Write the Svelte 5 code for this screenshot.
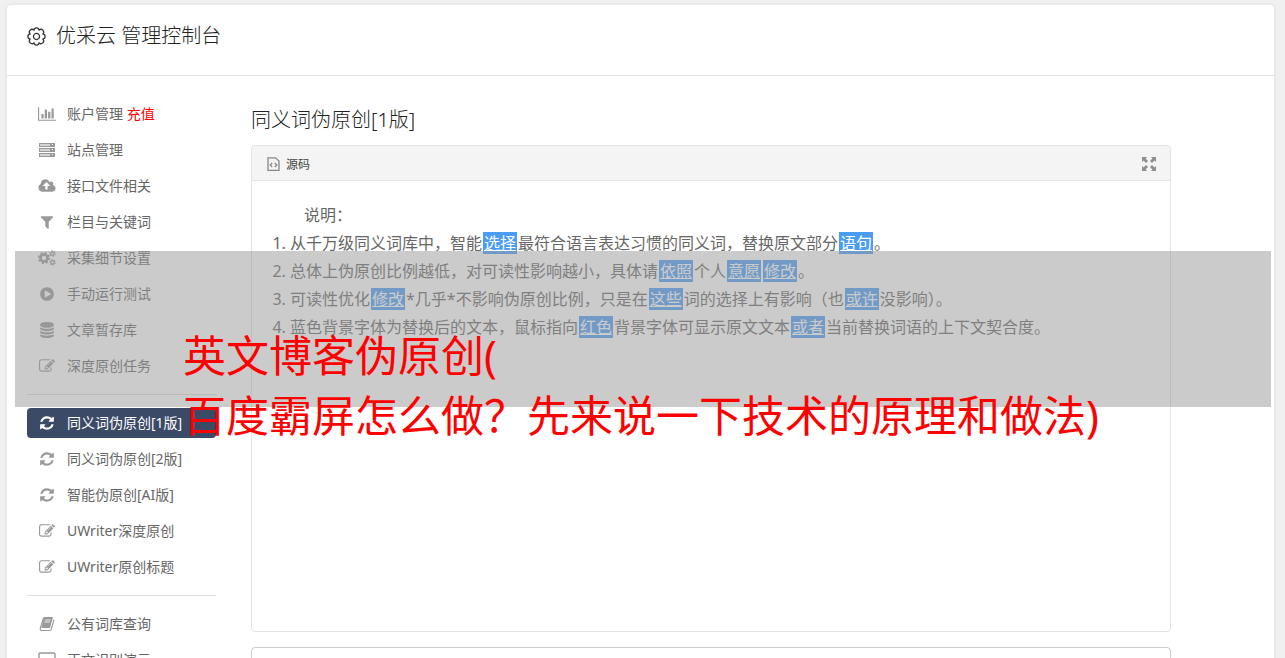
<script lang="ts">
  const groups = [
    [
      { label: '账户管理', extra: '充值', icon: 'chart' },
      { label: '站点管理', icon: 'server' },
      { label: '接口文件相关', icon: 'cloud' },
      { label: '栏目与关键词', icon: 'filter' },
      { label: '采集细节设置', icon: 'cogs' },
      { label: '手动运行测试', icon: 'play' },
      { label: '文章暂存库', icon: 'database' },
      { label: '深度原创任务', icon: 'edit' },
    ],
    [
      { label: '同义词伪原创[1版]', icon: 'refresh' },
      { label: '同义词伪原创[2版]', icon: 'refresh' },
      { label: '智能伪原创[AI版]', icon: 'refresh' },
      { label: 'UWriter深度原创', icon: 'edit' },
      { label: 'UWriter原创标题', icon: 'edit' },
    ],
    [
      { label: '公有词库查询', icon: 'book' },
      { label: '正文识别演示', icon: 'desktop' },
    ],
  ];

  const icons: Record<string, { box: string; d: string }> = {
    chart: {
      box: '0 0 2048 1792',
      d: 'M640 896v512h-256v-512h256zm384-512v1024h-256v-1024h256zm1024 1152v128h-2048v-1536h128v1408h1920zm-640-896v768h-256v-768h256zm384-384v1152h-256v-1152h256z',
    },
    cloud: {
      box: '0 0 1920 1792',
      d: 'M1280 864q0-14-9-23l-352-352q-9-9-23-9t-23 9l-351 351q-10 12-10 24 0 14 9 23t23 9h224v352q0 13 9.5 22.5t22.5 9.5h192q13 0 22.5-9.5t9.5-22.5v-352h224q13 0 22.5-9.5t9.5-22.5zm640 288q0 159-112.5 271.5t-271.5 112.5h-1088q-185 0-316.5-131.5t-131.5-316.5q0-130 70-240t188-165q-2-30-2-43 0-212 150-362t362-150q156 0 285.5 87t188.5 231q71-62 166-62 106 0 181 75t75 181q0 76-41 138 130 31 213.5 135.5t83.5 238.5z',
    },
    filter: {
      box: '0 0 1792 1792',
      d: 'M1595 295q17 41-14 70l-493 493v742q0 42-39 59-13 5-25 5-27 0-45-19l-256-256q-19-19-19-45v-486l-493-493q-31-29-14-70 17-39 59-39h1280q42 0 59 39z',
    },
    play: {
      box: '0 0 1792 1792',
      d: 'M896 128q209 0 385.5 103t279.5 279.5 103 385.5-103 385.5-279.5 279.5-385.5 103-385.5-103-279.5-279.5-103-385.5 103-385.5 279.5-279.5 385.5-103zm384 823q32-18 32-55t-32-55l-544-320q-31-19-64-1-32 19-32 56v640q0 37 32 56 16 8 32 8 17 0 32-9z',
    },
    database: {
      box: '0 0 1792 1792',
      d: 'M896 768q237 0 443-43t325-127v170q0 69-103 128t-280 93.5-385 34.5-385-34.5-280-93.5-103-128v-170q119 84 325 127t443 43zm0 768q237 0 443-43t325-127v170q0 69-103 128t-280 93.5-385 34.5-385-34.5-280-93.5-103-128v-170q119 84 325 127t443 43zm0-384q237 0 443-43t325-127v170q0 69-103 128t-280 93.5-385 34.5-385-34.5-280-93.5-103-128v-170q119 84 325 127t443 43zm0-1152q208 0 385 34.5t280 93.5 103 128v128q0 69-103 128t-280 93.5-385 34.5-385-34.5-280-93.5-103-128v-128q0-69 103-128t280-93.5 385-34.5z',
    },
    edit: {
      box: '0 0 1792 1792',
      d: 'M888 1184l116-116-152-152-116 116v56h96v96h56zm440-720q-16-16-33 1l-350 350q-17 17-1 33t33-1l350-350q17-17 1-33zm80 594v190q0 119-84.5 203.5t-203.5 84.5h-832q-119 0-203.5-84.5t-84.5-203.5v-832q0-119 84.5-203.5t203.5-84.5h832q63 0 117 25 15 7 18 23 3 17-9 29l-49 49q-14 14-32 8-23-6-45-6h-832q-66 0-113 47t-47 113v832q0 66 47 113t113 47h832q66 0 113-47t47-113v-126q0-13 9-22l64-64q15-15 35-7t20 29zm-96-738l288 288-672 672h-288v-288zm444 132l-92 92-288-288 92-92q28-28 68-28t68 28l152 152q28 28 28 68t-28 68z',
    },
    refresh: {
      box: '0 0 1792 1792',
      d: 'M1639 1056q0 5-1 7-64 268-268 434.5t-478 166.5q-146 0-282.5-55t-243.5-157l-129 129q-19 19-45 19t-45-19-19-45v-448q0-26 19-45t45-19h448q26 0 45 19t19 45-19 45l-137 137q71 66 161 102t187 36q134 0 250-65t186-179q11-17 53-117 8-23 30-23h192q13 0 22.5 9.5t9.5 22.5zm25-800v448q0 26-19 45t-45 19h-448q-26 0-45-19t-19-45 19-45l138-138q-148-137-349-137-134 0-250 65t-186 179q-11 17-53 117-8 23-30 23h-199q-13 0-22.5-9.5t-9.5-22.5v-7q65-268 270-434.5t480-166.5q146 0 284 55.5t245 156.5l130-129q19-19 45-19t45 19 19 45z',
    },
  };

  // plain strings are text, marked ones are replaced words
  const notes = [
    ['从千万级同义词库中，智能', { w: '选择' }, '最符合语言表达习惯的同义词，替换原文部分', { w: '语句' }, '。'],
    ['总体上伪原创比例越低，对可读性影响越小，具体请', { w: '依照' }, '个人', { w: '意愿' }, { w: '修改' }, '。'],
    ['可读性优化', { w: '修改' }, '*几乎*不影响伪原创比例，只是在', { w: '这些' }, '词的选择上有影响（也', { w: '或许' }, '没影响）。'],
    ['蓝色背景字体为替换后的文本，鼠标指向', { w: '红色' }, '背景字体可显示原文文本', { w: '或者' }, '当前替换词语的上下文契合度。'],
  ];

  let active = $state('同义词伪原创[1版]');
</script>

{#snippet navIcon(name: string)}
  {#if icons[name]}
    <svg class="icon" class:wide={name === 'chart' || name === 'cloud'} viewBox={icons[name].box} fill="currentColor" aria-hidden="true">
      <path d={icons[name].d} />
    </svg>
  {:else if name === 'server'}
    <svg class="icon" viewBox="0 0 16 16" aria-hidden="true">
      {#each [1, 6, 11] as y}
        <rect x="0" {y} width="16" height="4" fill="currentColor" />
        <rect x="1" y={y + 1} width="10" height="2" fill="#d4d4d4" />
        <rect x="13" y={y + 1} width="1" height="1" fill="#fff" />
      {/each}
    </svg>
  {:else if name === 'cogs'}
    <svg class="icon wide" viewBox="0 0 18 16" fill="none" stroke="currentColor" aria-hidden="true">
      <circle cx="6" cy="8" r="3.5" stroke-width="2.6" />
      <circle cx="6" cy="8" r="5.2" stroke-width="1.8" stroke-dasharray="2.04 2.04" />
      <circle cx="14.5" cy="3.6" r="1.7" stroke-width="1.3" />
      <circle cx="14.5" cy="3.6" r="2.7" stroke-width="1.1" stroke-dasharray="1.41 1.41" />
      <circle cx="14.5" cy="12.4" r="1.7" stroke-width="1.3" />
      <circle cx="14.5" cy="12.4" r="2.7" stroke-width="1.1" stroke-dasharray="1.41 1.41" />
    </svg>
  {:else if name === 'book'}
    <svg class="icon" viewBox="0 0 16 16" aria-hidden="true">
      <path d="M5 1h9l-3 11H2.5z" fill="currentColor" />
      <path d="M6 4h5.6M5.4 6h5.6" stroke="#fff" stroke-width=".8" />
      <path d="M4.6 1.6 1.4 12q-.6 2.4 1.4 2.5h8q1 0 1.4-1.1L15 3.6" fill="none" stroke="currentColor" stroke-width="1.2" />
    </svg>
  {:else}
    <svg class="icon wide" viewBox="0 0 18 16" fill="none" stroke="currentColor" aria-hidden="true">
      <rect x="1" y="1" width="16" height="11" rx="1" stroke-width="1.4" />
      <path d="M6 15h6M9 12v3" stroke-width="1.4" />
    </svg>
  {/if}
{/snippet}

<div class="page">
  <div class="card">
    <header class="top">
      <svg class="gear" viewBox="-9 -9 18 18" fill="none" stroke="currentColor" aria-hidden="true">
        <path
          stroke-width="1.2"
          d="M2.5-6.1A2.55 2.55 0 0 1 6.1-2.5 2.55 2.55 0 0 1 6.1 2.5 2.55 2.55 0 0 1 2.5 6.1 2.55 2.55 0 0 1-2.5 6.1 2.55 2.55 0 0 1-6.1 2.5 2.55 2.55 0 0 1-6.1-2.5 2.55 2.55 0 0 1-2.5-6.1 2.55 2.55 0 0 1 2.5-6.1z"
        />
        <circle r="2.9" stroke-width="1.2" />
      </svg>
      <h1>优采云 管理控制台</h1>
    </header>

    <div class="layout">
      <nav class="side">
        {#each groups as group, g}
          {#if g > 0}<hr />{/if}
          <ul>
            {#each group as item}
              <li>
                <a href="#nav" class:active={active === item.label} onclick={() => (active = item.label)}>
                  <span class="slot">{@render navIcon(item.icon)}</span>
                  <span>{item.label}{#if item.extra}{' '}<span class="pay">{item.extra}</span>{/if}</span>
                </a>
              </li>
            {/each}
          </ul>
        {/each}
      </nav>

      <main class="content">
        <h2>同义词伪原创[1版]</h2>

        <section class="editor">
          <div class="toolbar">
            <button class="tool">
              <svg width="13" height="14" viewBox="0 0 13 14" fill="none" stroke="#888" aria-hidden="true">
                <path d="M1 .8h7.5L12 4v9.3H1z" stroke-width="1.3" />
                <path d="M5.2 6 3.2 8l2 2M7.8 6l2 2-2 2" stroke-width="1.3" />
              </svg>
              源码
            </button>
            <button class="tool" aria-label="全屏">
              <svg width="14" height="14" viewBox="0 0 14 14" fill="#8e8e8e" aria-hidden="true">
                <path d="M0 0h5L3.6 1.6 6 4 4 6 1.6 3.6 0 5zM14 0v5l-1.6-1.4L10 6 8 4l2.4-2.4L9 0zM0 14V9l1.6 1.4L4 8l2 2-2.4 2.4L5 14zM14 14H9l1.4-1.6L8 10l2-2 2.4 2.4L14 9z" />
              </svg>
            </button>
          </div>
          <div class="text">
            <p>说明：</p>
            <ol>
              {#each notes as note}
                <li>
                  {#each note as part}{#if typeof part === 'string'}{part}{:else}<span class="word">{part.w}</span>{/if}{/each}
                </li>
              {/each}
            </ol>
          </div>
        </section>

        <section class="result"></section>
      </main>
    </div>
  </div>

  <div class="banner">
    英文博客伪原创(<br />百度霸屏怎么做？先来说一下技术的原理和做法)
  </div>
</div>

<style>
  :global(body) {
    background: #f0f0f0;
  }

  .page {
    position: relative;
    box-sizing: border-box;
    height: 100vh;
    padding: 5px 11px 0 7px;
    overflow: hidden;
    font-family: 'Noto Sans', 'Noto Sans CJK SC', sans-serif;
    color: #666;
  }

  .card {
    min-height: 100%;
    background: #fff;
    border-radius: 4px;
    box-shadow: 0 0 0 2px #e9e9e9;
  }

  .top {
    display: flex;
    align-items: center;
    gap: 10px;
    padding: 17px 20px 25px;
    border-bottom: 1px solid #e5e5e5;
    color: #333;
  }

  .gear {
    width: 19px;
    height: 19px;
  }

  h1,
  h2 {
    margin: 0;
    font-size: 20px;
    line-height: 28px;
    font-weight: 300;
    color: #222;
  }

  .layout {
    display: flex;
    gap: 35px;
    padding: 23px 20px 0;
  }

  .side {
    flex: 0 0 189px;
    font-size: 14px;
    line-height: 30px;
  }

  .side ul {
    display: flex;
    flex-direction: column;
    gap: 6px;
    margin: 0;
    padding: 0;
    list-style: none;
  }

  .side hr {
    margin: 13px 0;
    border: 0;
    border-top: 1px solid #ddd;
  }

  .side a {
    display: flex;
    align-items: center;
    height: 30px;
    border-radius: 4px;
    color: #666;
    text-decoration: none;
    white-space: nowrap;
  }

  .side a.active {
    background: #3b4a66;
    color: #fff;
  }

  .slot {
    display: flex;
    justify-content: center;
    width: 40px;
    color: #999;
  }

  .active .slot {
    color: #fff;
  }

  .icon {
    width: 16px;
    height: 16px;
  }

  .icon.wide {
    width: 18px;
  }

  .side .pay {
    color: #f00;
  }

  .content {
    flex: 0 1 920px;
    padding-top: 7px;
  }

  .editor {
    display: flex;
    flex-direction: column;
    min-height: 485px;
    margin-top: 11px;
    border: 1px solid #e3e3e3;
    border-radius: 4px;
  }

  .toolbar {
    display: flex;
    justify-content: space-between;
    height: 34px;
    padding: 0 14px 0 15px;
    background: #f4f4f4;
    border-bottom: 1px solid #e3e3e3;
    border-radius: 4px 4px 0 0;
  }

  .tool {
    display: flex;
    align-items: center;
    gap: 6px;
    padding: 2px 0 0;
    background: none;
    border: 0;
    font: inherit;
    font-size: 12px;
    color: #444;
    cursor: pointer;
  }

  .text {
    padding: 20px;
    font-size: 16px;
    line-height: 28px;
  }

  .text p {
    margin: 0;
    text-indent: 2em;
  }

  .text ol {
    margin: 0;
    padding-left: 18px;
  }

  .word {
    margin: 0 1px;
    padding: 0 1px;
    background: #4a9cf5;
    color: #fff;
    text-decoration: underline;
  }

  .result {
    height: 240px;
    margin-top: 15px;
    border: 1px solid #ccc;
    border-radius: 4px;
  }

  /* translucent band laid over the page, its title runs past the bottom edge */
  .banner {
    position: absolute;
    top: 251px;
    left: 15px;
    right: 14px;
    box-sizing: border-box;
    height: 156px;
    padding: 75px 0 0 168px;
    background: rgba(151, 151, 151, 0.5);
    color: #f00;
    font-size: 43px;
    line-height: 60px;
    white-space: nowrap;
  }
</style>
